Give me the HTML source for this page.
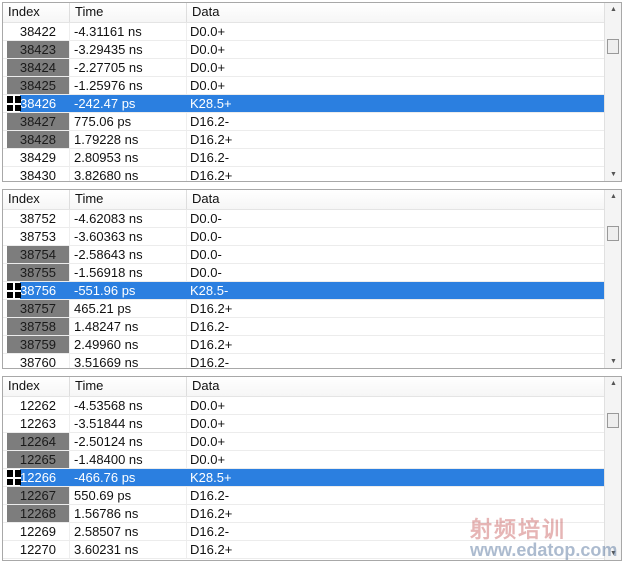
<!DOCTYPE html><html><head><style>
body{margin:0;width:628px;height:562px;background:#fff;font-family:"Liberation Sans",Tahoma,sans-serif;font-size:13px;color:#111;position:relative;overflow:hidden}
.p{position:absolute;left:2px;width:618px;border:1px solid #a8a8a8;background:#fff;overflow:hidden}
.h{height:19px;border-bottom:1px solid #e4e4e4;display:flex;line-height:18px;background:linear-gradient(#fff,#f6f6f6)}
.h div{border-right:1px solid #dedede;padding-left:5px;box-sizing:border-box}
.r{height:18px;border-bottom:1px solid #ececec;box-sizing:border-box;display:flex;line-height:17px;position:relative}
.c1{width:67px;text-align:right;padding-right:13px;box-sizing:border-box;border-right:1px solid #eee}
.c2{width:117px;padding-left:4px;box-sizing:border-box;border-right:1px solid #eee}
.c3{width:417px;padding-left:3px;box-sizing:border-box}
.g .c1{background:#7d7d7d;margin-left:4px;width:63px;color:#1a1a1a}
.s .c1,.s .c2,.s .c3{background:#2b7fe0;color:#fff;border-color:#2b7fe0}
.s .c1{margin-left:17px;width:50px}
.ic{position:absolute;left:4px;top:1px;width:14px;height:15px;background:#000}
.ic:before{content:"";position:absolute;left:6px;top:0;width:2px;height:15px;background:#fff}
.ic:after{content:"";position:absolute;left:0;top:7px;width:14px;height:2px;background:#fff}
.sb{position:absolute;right:0;top:0;width:16px;bottom:0;background:#f4f4f4;border-left:1px solid #e0e0e0}
.th{position:absolute;left:2px;top:36px;width:10px;height:13px;border:1px solid #999;background:#eee}
.au,.ad{position:absolute;left:5px;font-size:7px;color:#555}
.au{top:3px}.ad{bottom:3px}
.wm{position:absolute;left:470px;top:512px;font:bold 22px "Liberation Sans",sans-serif;color:rgba(200,90,90,.45);letter-spacing:2px}
.wm2{position:absolute;left:470px;top:540px;font:bold 18px "Liberation Sans",sans-serif;color:rgba(90,120,160,.5)}
</style></head><body>

<div class="p" style="top:2px;height:178px">
<div class="h"><div style="width:67px">Index</div><div style="width:117px">Time</div><div style="width:418px">Data</div></div>
<div class="r"><div class="c1">38422</div><div class="c2">-4.31161 ns</div><div class="c3">D0.0+</div></div>
<div class="r g"><div class="c1">38423</div><div class="c2">-3.29435 ns</div><div class="c3">D0.0+</div></div>
<div class="r g"><div class="c1">38424</div><div class="c2">-2.27705 ns</div><div class="c3">D0.0+</div></div>
<div class="r g"><div class="c1">38425</div><div class="c2">-1.25976 ns</div><div class="c3">D0.0+</div></div>
<div class="r s"><span class="ic"></span><div class="c1">38426</div><div class="c2">-242.47 ps</div><div class="c3">K28.5+</div></div>
<div class="r g"><div class="c1">38427</div><div class="c2">775.06 ps</div><div class="c3">D16.2-</div></div>
<div class="r g"><div class="c1">38428</div><div class="c2">1.79228 ns</div><div class="c3">D16.2+</div></div>
<div class="r"><div class="c1">38429</div><div class="c2">2.80953 ns</div><div class="c3">D16.2-</div></div>
<div class="r"><div class="c1">38430</div><div class="c2">3.82680 ns</div><div class="c3">D16.2+</div></div>
<div class="sb"><span class="au">▲</span><div class="th"></div><span class="ad">▼</span></div>
</div>

<div class="p" style="top:189px;height:178px">
<div class="h"><div style="width:67px">Index</div><div style="width:117px">Time</div><div style="width:418px">Data</div></div>
<div class="r"><div class="c1">38752</div><div class="c2">-4.62083 ns</div><div class="c3">D0.0-</div></div>
<div class="r"><div class="c1">38753</div><div class="c2">-3.60363 ns</div><div class="c3">D0.0-</div></div>
<div class="r g"><div class="c1">38754</div><div class="c2">-2.58643 ns</div><div class="c3">D0.0-</div></div>
<div class="r g"><div class="c1">38755</div><div class="c2">-1.56918 ns</div><div class="c3">D0.0-</div></div>
<div class="r s"><span class="ic"></span><div class="c1">38756</div><div class="c2">-551.96 ps</div><div class="c3">K28.5-</div></div>
<div class="r g"><div class="c1">38757</div><div class="c2">465.21 ps</div><div class="c3">D16.2+</div></div>
<div class="r g"><div class="c1">38758</div><div class="c2">1.48247 ns</div><div class="c3">D16.2-</div></div>
<div class="r g"><div class="c1">38759</div><div class="c2">2.49960 ns</div><div class="c3">D16.2+</div></div>
<div class="r"><div class="c1">38760</div><div class="c2">3.51669 ns</div><div class="c3">D16.2-</div></div>
<div class="sb"><span class="au">▲</span><div class="th"></div><span class="ad">▼</span></div>
</div>

<div class="p" style="top:376px;height:183px">
<div class="h"><div style="width:67px">Index</div><div style="width:117px">Time</div><div style="width:418px">Data</div></div>
<div class="r"><div class="c1">12262</div><div class="c2">-4.53568 ns</div><div class="c3">D0.0+</div></div>
<div class="r"><div class="c1">12263</div><div class="c2">-3.51844 ns</div><div class="c3">D0.0+</div></div>
<div class="r g"><div class="c1">12264</div><div class="c2">-2.50124 ns</div><div class="c3">D0.0+</div></div>
<div class="r g"><div class="c1">12265</div><div class="c2">-1.48400 ns</div><div class="c3">D0.0+</div></div>
<div class="r s"><span class="ic"></span><div class="c1">12266</div><div class="c2">-466.76 ps</div><div class="c3">K28.5+</div></div>
<div class="r g"><div class="c1">12267</div><div class="c2">550.69 ps</div><div class="c3">D16.2-</div></div>
<div class="r g"><div class="c1">12268</div><div class="c2">1.56786 ns</div><div class="c3">D16.2+</div></div>
<div class="r"><div class="c1">12269</div><div class="c2">2.58507 ns</div><div class="c3">D16.2-</div></div>
<div class="r"><div class="c1">12270</div><div class="c2">3.60231 ns</div><div class="c3">D16.2+</div></div>
<div class="sb"><span class="au">▲</span><div class="th"></div><span class="ad">▼</span></div>
</div>

<div class="wm">射频培训</div>
<div class="wm2">www.edatop.com</div>
</body></html>
